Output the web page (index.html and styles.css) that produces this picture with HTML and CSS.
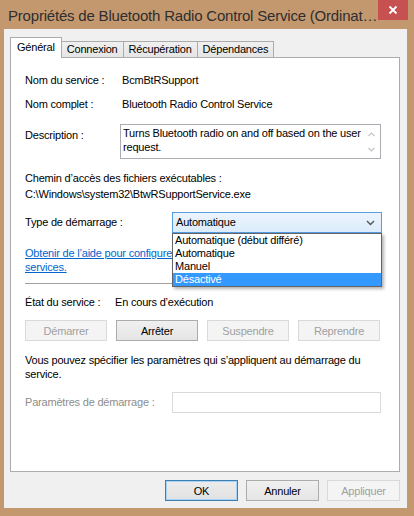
FILE: index.html
```html
<!DOCTYPE html>
<html lang="fr">
<head>
<meta charset="utf-8">
<title>Propriétés de Bluetooth Radio Control Service</title>
<link rel="stylesheet" href="styles.css">
</head>
<body>
<div class="frame">
  <div class="titlebar">
    <span class="title">Propriétés de Bluetooth Radio Control Service (Ordinat…</span>
    <div class="close">
      <svg width="10" height="10" viewBox="0 0 10 10"><path d="M1.5 1.5 L8.5 8.5 M8.5 1.5 L1.5 8.5" stroke="#fff" stroke-width="1.8" fill="none"/></svg>
    </div>
  </div>
  <div class="client">
    <div class="tabs">
      <div class="tab active">Général</div>
      <div class="tab">Connexion</div>
      <div class="tab">Récupération</div>
      <div class="tab">Dépendances</div>
    </div>
    <div class="panel">
      <div class="row r-name"><span class="lbl">Nom du service :</span><span class="val">BcmBtRSupport</span></div>
      <div class="row r-full"><span class="lbl">Nom complet :</span><span class="val">Bluetooth Radio Control Service</span></div>
      <div class="row r-desc">
        <span class="lbl lbl-desc">Description :</span>
        <div class="textarea">
          <div class="ta-text">Turns Bluetooth radio on and off based on the user request.</div>
          <div class="ta-scroll">
            <svg width="7" height="5" viewBox="0 0 7 5"><path d="M0.5 4 L3.5 1 L6.5 4" stroke="#c4c4c4" stroke-width="1.2" fill="none"/></svg>
            <svg width="7" height="5" viewBox="0 0 7 5"><path d="M0.5 1 L3.5 4 L6.5 1" stroke="#c4c4c4" stroke-width="1.2" fill="none"/></svg>
          </div>
        </div>
      </div>
      <div class="path-block">
        <div>Chemin d’accès des fichiers exécutables :</div>
        <div>C:\Windows\system32\BtwRSupportService.exe</div>
      </div>
      <div class="row r-type">
        <span class="lbl lbl-type">Type de démarrage :</span>
        <div class="select">
          <span>Automatique</span>
          <svg width="9" height="6" viewBox="0 0 9 6"><path d="M1 1 L4.5 4.5 L8 1" stroke="#555" stroke-width="1.4" fill="none"/></svg>
        </div>
      </div>
      <div class="link-block"><a class="link" href="#">Obtenir de l’aide pour configurer les options de récupération des<br>services.</a></div>
      <div class="sep"></div>
      <div class="row r-state"><span class="lbl lbl-state">État du service :</span><span>En cours d’exécution</span></div>
      <div class="svc-buttons">
        <div class="btn disabled">Démarrer</div>
        <div class="btn">Arrêter</div>
        <div class="btn disabled">Suspendre</div>
        <div class="btn disabled">Reprendre</div>
      </div>
      <div class="para">Vous pouvez spécifier les paramètres qui s’appliquent au démarrage du service.</div>
      <div class="row r-param">
        <span class="lbl lbl-type gray">Paramètres de démarrage :</span>
        <div class="input"></div>
      </div>
      <div class="dropdown">
        <div class="opt">Automatique (début différé)</div>
        <div class="opt">Automatique</div>
        <div class="opt">Manuel</div>
        <div class="opt sel">Désactivé</div>
      </div>
    </div>
    <div class="footer">
      <div class="btn fbtn default">OK</div>
      <div class="btn fbtn">Annuler</div>
      <div class="btn fbtn disabled">Appliquer</div>
    </div>
  </div>
</div>
</body>
</html>
```
FILE: styles.css
```css
* { box-sizing: border-box; }
html, body { margin: 0; padding: 0; }
body {
  background: #c4986f;
  font-family: "Liberation Sans", Arial, sans-serif;
  font-size: 11px;
  letter-spacing: -0.2px;
  color: #000;
  overflow: hidden;
}
.frame {
  width: 414px;
  height: 516px;
  display: flex;
  flex-direction: column;
}
.titlebar {
  height: 29px;
  flex: none;
  display: flex;
  align-items: flex-start;
  padding-left: 8px;
}
.title {
  font-size: 15px;
  letter-spacing: -0.2px;
  line-height: 20px;
  margin-top: 6px;
  color: #2e2e2e;
  white-space: nowrap;
}
.close {
  margin-left: auto;
  margin-right: 6px;
  width: 30px;
  height: 20px;
  background: #c75050;
  display: flex;
  align-items: center;
  justify-content: center;
  flex: none;
}
.client {
  flex: 1;
  margin: 0 7px 8px 4px;
  background: #f0f0f0;
  padding: 8px 7px 0 6px;
}
.tabs {
  display: flex;
  align-items: flex-end;
  height: 20px;
}
.tab {
  height: 16px;
  line-height: 14px;
  padding: 0 5px;
  border: 1px solid #acacac;
  border-bottom: none;
  border-left: none;
  background: linear-gradient(#f0f0f0, #e5e5e5);
  white-space: nowrap;
}
.tab.active {
  height: 21px;
  margin-bottom: -1px;
  background: #fff;
  border-left: 1px solid #acacac;
  padding: 2px 6px 0 6px;
  position: relative;
  z-index: 1;
}
.panel {
  position: relative;
  height: 415px;
  background: #fff;
  border: 1px solid #acacac;
  padding: 15px 0 0 14px;
}
.row {
  display: flex;
  align-items: center;
  line-height: 15px;
}
.lbl { width: 97px; flex: none; }
.r-full { margin-top: 9px; }
.r-desc { margin-top: 12px; align-items: flex-start; }
.lbl-desc { width: 95px; padding-top: 4px; }
.textarea {
  width: 261px;
  height: 35px;
  border: 1px solid #abadb3;
  display: flex;
}
.ta-text {
  flex: 1;
  padding: 1px 0 0 2px;
  line-height: 14px;
}
.ta-scroll {
  width: 17px;
  flex: none;
  display: flex;
  flex-direction: column;
  align-items: center;
  justify-content: space-between;
  padding: 7px 0 6px;
}
.ta-scroll svg { display: block; }
.path-block {
  margin-top: 11px;
  line-height: 16px;
}
.r-type { margin-top: 10px; }
.lbl-type { width: 147px; }
.select {
  width: 210px;
  height: 21px;
  border: 1px solid #569de5;
  background: linear-gradient(#ecf4fc, #dcecfc);
  display: flex;
  align-items: center;
  justify-content: space-between;
  padding: 0 6px 0 3px;
}
.select svg { display: block; }
.link-block {
  margin-top: 13px;
  line-height: 14px;
}
.link {
  color: #0066cc;
  text-decoration: underline;
}
.sep {
  margin-top: 9px;
  width: 356px;
  height: 1px;
  background: #a0a0a0;
}
.r-state { margin-top: 11px; }
.lbl-state { width: 90px; }
.svc-buttons {
  margin-top: 10px;
  display: flex;
  gap: 9px;
}
.btn {
  width: 82px;
  height: 21px;
  border: 1px solid #acacac;
  background: linear-gradient(#f0f0f0, #e5e5e5);
  display: flex;
  align-items: center;
  justify-content: center;
}
.btn.disabled {
  border-color: #d9d9d9;
  background: #f4f4f4;
  color: #a0a0a0;
}
.para {
  margin-top: 12px;
  line-height: 14px;
  width: 350px;
}
.r-param { margin-top: 11px; }
.gray { color: #8d8d8d; }
.input {
  width: 209px;
  height: 21px;
  border: 1px solid #d9d9d9;
  background: #fff;
}
.dropdown {
  position: absolute;
  left: 161px;
  top: 175px;
  width: 210px;
  background: #fff;
  border: 1px solid #646464;
  box-shadow: 2px 2px 3px rgba(0, 0, 0, 0.3);
  padding: 0;
}
.opt {
  line-height: 13px;
  height: 13px;
  padding-left: 2px;
  white-space: nowrap;
}
.opt.sel {
  background: #3399ff;
  color: #fff;
}
.footer {
  margin-top: 8px;
  display: flex;
  justify-content: flex-end;
  gap: 8px;
}
.fbtn { width: 73px; }
.btn.default {
  border-color: #3c7fb1;
  box-shadow: inset 0 0 0 1px #a9d3f5;
  background: linear-gradient(#ececec, #e2e2e2);
}
```
